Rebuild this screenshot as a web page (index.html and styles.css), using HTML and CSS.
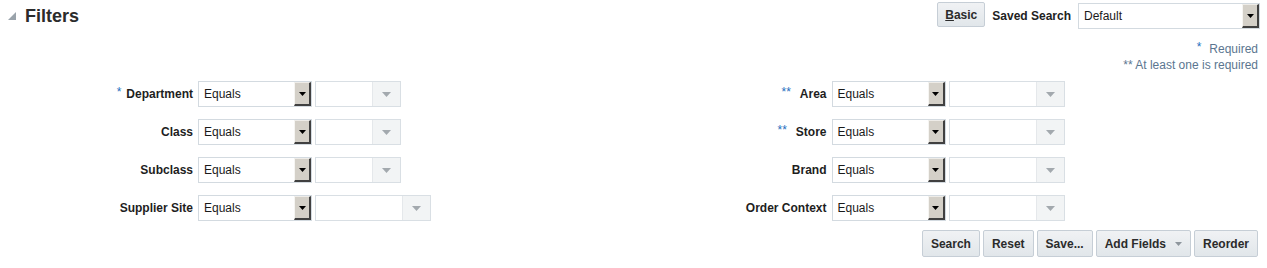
FILE: index.html
```html
<!DOCTYPE html>
<html>
<head>
<meta charset="utf-8">
<link rel="stylesheet" href="styles.css">
</head>
<body>
<div class="header">
  <div class="title">
    <svg class="disclose" width="8" height="8" viewBox="0 0 8 8"><polygon points="8,0 8,8 0,8" fill="#9aa3ab"/></svg>
    <h2>Filters</h2>
  </div>
  <div class="saved">
    <button class="btn btn-basic"><u>B</u>asic</button>
    <span class="saved-label">Saved Search</span>
    <div class="select select-wide">
      <span class="val">Default</span>
      <span class="dd"><svg width="7" height="4" viewBox="0 0 7 4"><polygon points="0,0 7,0 3.5,4" fill="#000"/></svg></span>
    </div>
  </div>
</div>

<div class="notes">
  <div><span class="req">*</span>Required</div>
  <div>** At least one is required</div>
</div>

<div class="form">
  <div class="col">
    <div class="label"><span class="req">*</span>Department</div>
    <div class="fields">
      <div class="select"><span class="val">Equals</span><span class="dd"><svg width="7" height="4" viewBox="0 0 7 4"><polygon points="0,0 7,0 3.5,4" fill="#000"/></svg></span></div>
      <div class="combo"><span class="input"></span><span class="arr"><svg width="9" height="5" viewBox="0 0 9 5"><polygon points="0,0 9,0 4.5,5" fill="#a3a9ae"/></svg></span></div>
    </div>
    <div class="label">Class</div>
    <div class="fields">
      <div class="select"><span class="val">Equals</span><span class="dd"><svg width="7" height="4" viewBox="0 0 7 4"><polygon points="0,0 7,0 3.5,4" fill="#000"/></svg></span></div>
      <div class="combo"><span class="input"></span><span class="arr"><svg width="9" height="5" viewBox="0 0 9 5"><polygon points="0,0 9,0 4.5,5" fill="#a3a9ae"/></svg></span></div>
    </div>
    <div class="label">Subclass</div>
    <div class="fields">
      <div class="select"><span class="val">Equals</span><span class="dd"><svg width="7" height="4" viewBox="0 0 7 4"><polygon points="0,0 7,0 3.5,4" fill="#000"/></svg></span></div>
      <div class="combo"><span class="input"></span><span class="arr"><svg width="9" height="5" viewBox="0 0 9 5"><polygon points="0,0 9,0 4.5,5" fill="#a3a9ae"/></svg></span></div>
    </div>
    <div class="label">Supplier Site</div>
    <div class="fields">
      <div class="select"><span class="val">Equals</span><span class="dd"><svg width="7" height="4" viewBox="0 0 7 4"><polygon points="0,0 7,0 3.5,4" fill="#000"/></svg></span></div>
      <div class="combo combo-wide"><span class="input"></span><span class="arr"><svg width="9" height="5" viewBox="0 0 9 5"><polygon points="0,0 9,0 4.5,5" fill="#a3a9ae"/></svg></span></div>
    </div>
  </div>

  <div class="col">
    <div class="label"><span class="req req2">**</span>Area</div>
    <div class="fields">
      <div class="select"><span class="val">Equals</span><span class="dd"><svg width="7" height="4" viewBox="0 0 7 4"><polygon points="0,0 7,0 3.5,4" fill="#000"/></svg></span></div>
      <div class="combo combo-wide"><span class="input"></span><span class="arr"><svg width="9" height="5" viewBox="0 0 9 5"><polygon points="0,0 9,0 4.5,5" fill="#a3a9ae"/></svg></span></div>
    </div>
    <div class="label"><span class="req req2">**</span>Store</div>
    <div class="fields">
      <div class="select"><span class="val">Equals</span><span class="dd"><svg width="7" height="4" viewBox="0 0 7 4"><polygon points="0,0 7,0 3.5,4" fill="#000"/></svg></span></div>
      <div class="combo combo-wide"><span class="input"></span><span class="arr"><svg width="9" height="5" viewBox="0 0 9 5"><polygon points="0,0 9,0 4.5,5" fill="#a3a9ae"/></svg></span></div>
    </div>
    <div class="label">Brand</div>
    <div class="fields">
      <div class="select"><span class="val">Equals</span><span class="dd"><svg width="7" height="4" viewBox="0 0 7 4"><polygon points="0,0 7,0 3.5,4" fill="#000"/></svg></span></div>
      <div class="combo combo-wide"><span class="input"></span><span class="arr"><svg width="9" height="5" viewBox="0 0 9 5"><polygon points="0,0 9,0 4.5,5" fill="#a3a9ae"/></svg></span></div>
    </div>
    <div class="label">Order Context</div>
    <div class="fields">
      <div class="select"><span class="val">Equals</span><span class="dd"><svg width="7" height="4" viewBox="0 0 7 4"><polygon points="0,0 7,0 3.5,4" fill="#000"/></svg></span></div>
      <div class="combo combo-wide"><span class="input"></span><span class="arr"><svg width="9" height="5" viewBox="0 0 9 5"><polygon points="0,0 9,0 4.5,5" fill="#a3a9ae"/></svg></span></div>
    </div>
  </div>
</div>

<div class="actions">
  <button class="btn">Search</button>
  <button class="btn">Reset</button>
  <button class="btn">Save...</button>
  <button class="btn btn-menu">Add Fields<svg width="7" height="4" viewBox="0 0 7 4"><polygon points="0,0 7,0 3.5,4" fill="#8e969d"/></svg></button>
  <button class="btn">Reorder</button>
</div>
</body>
</html>
```

FILE: styles.css
```css
body {
  margin: 0;
  font-family: "Liberation Sans", Arial, sans-serif;
  font-size: 12px;
  color: #222;
  background: #fff;
}

.header {
  display: flex;
  justify-content: space-between;
  align-items: center;
  height: 32px;
  padding: 0 7px 0 8px;
}

.title {
  display: flex;
  align-items: center;
  gap: 9px;
}

.disclose {
  margin-top: -1px;
}

.title h2 {
  margin: 0;
  font-size: 18px;
  font-weight: bold;
  line-height: 22px;
  color: #2b2b2b;
}

.saved {
  display: flex;
  align-items: center;
  gap: 7px;
}

.saved-label {
  font-weight: bold;
  color: #222;
}

.btn {
  height: 27px;
  padding: 0 8px;
  border: 1px solid #c6ced6;
  border-radius: 2px;
  background: linear-gradient(#f0f2f4, #e1e6ea);
  font-family: "Liberation Sans", Arial, sans-serif;
  font-size: 12px;
  font-weight: bold;
  color: #2b2b2b;
  cursor: pointer;
}

.btn-basic {
  height: 25px;
  padding: 0 7px;
  margin-bottom: 3px;
}

.btn-menu {
  display: flex;
  align-items: center;
  gap: 9px;
  padding: 0 8px 0 8px;
}

.select {
  display: flex;
  width: 114px;
  height: 26px;
  box-sizing: border-box;
  border: 1px solid #d3dae0;
  background: #fff;
}

.select-wide {
  width: 182px;
}

.select .val {
  flex: 1;
  padding-left: 5px;
  line-height: 24px;
  color: #1a1a1a;
}

.select .dd {
  width: 17px;
  box-sizing: border-box;
  background: #d4d0c8;
  border-top: 1px solid #eeece8;
  border-left: 1px solid #f6f5f2;
  border-right: 2px solid #404040;
  border-bottom: 2px solid #404040;
  display: flex;
  align-items: center;
  justify-content: center;
}

.combo {
  display: flex;
  width: 86px;
  height: 26px;
  box-sizing: border-box;
  border: 1px solid #d9dfe4;
  background: #fff;
}

.combo-wide {
  width: 116px;
}

.combo .input {
  flex: 1;
}

.combo .arr {
  width: 27px;
  background: #f2f4f5;
  border-left: 1px solid #e5e8eb;
  display: flex;
  align-items: center;
  justify-content: center;
}

.notes {
  text-align: right;
  padding: 9px 9px 0 0;
  line-height: 16px;
  color: #5b7690;
}

.notes .req {
  margin-right: 8px;
}

.req {
  color: #1f6fc0;
  font-weight: normal;
  margin-right: 5px;
  position: relative;
  top: -2px;
}

.req2 {
  margin-right: 9px;
}

.form {
  display: flex;
  margin-top: 8px;
}

.col {
  flex: 1;
  display: grid;
  grid-template-columns: 193px auto;
  justify-content: start;
  align-items: center;
  column-gap: 5px;
  row-gap: 12px;
}

.label {
  text-align: right;
  font-weight: bold;
  color: #1e1e1e;
  white-space: nowrap;
}

.fields {
  display: flex;
  gap: 3px;
}

.actions {
  display: flex;
  justify-content: flex-end;
  gap: 3px;
  padding-right: 9px;
  margin-top: 9px;
}
```
